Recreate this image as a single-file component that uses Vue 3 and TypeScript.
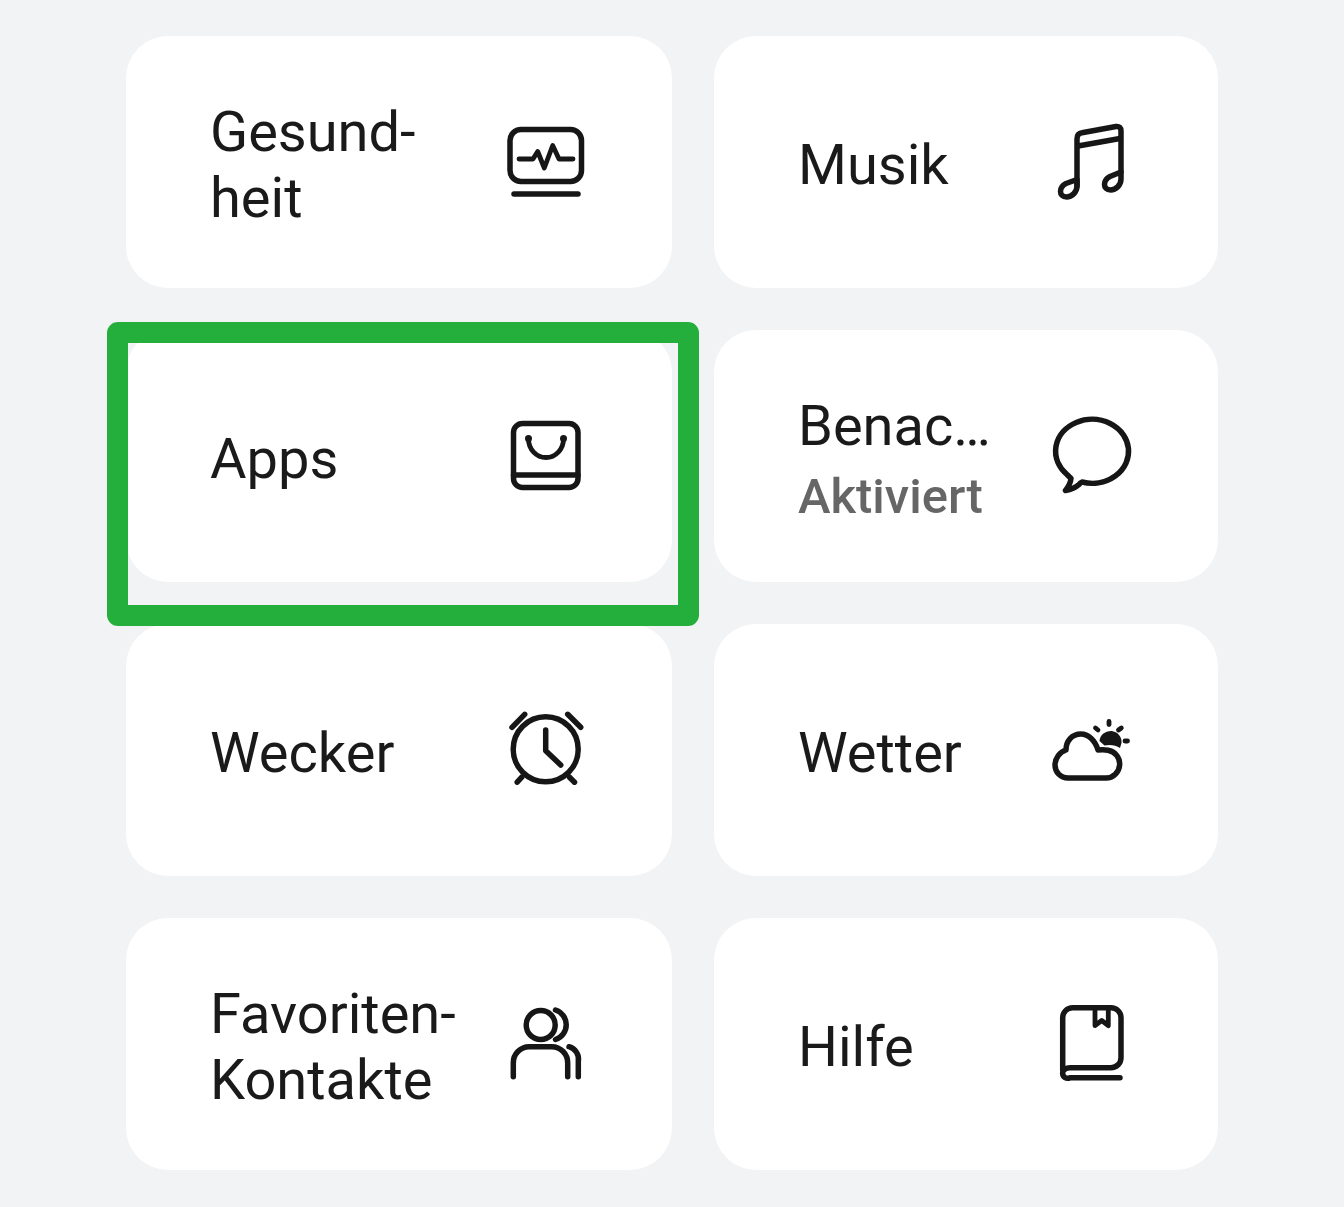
<script setup lang="ts">
interface Tile {
  label: string
  sub?: string
  marked?: boolean
  strokes: string[]
  thin?: string[]
  fills?: string[]
}

const tiles: Tile[] = [
  {
    label: 'Gesund-heit',
    strokes: ['M17 9.5H66.5A11 11 0 0 1 77.5 20.5V50.5A11 11 0 0 1 66.5 61.5H17A11 11 0 0 1 6 50.5V20.5A11 11 0 0 1 17 9.5Z', 'M10 74H74'],
    thin: ['M15 39H29L33.7 31.5L40.3 48L48.7 25.5L55 39H69']
  },
  {
    label: 'Musik',
    strokes: [
      'M27 66V19Q27 13.5 32 12.8L66 6.5Q71 6 71 11V52',
      'M28 26L70 18.5',
      'M27 59.5V66C27 72 22 77 16.5 77C12.5 77 10.5 74.5 10.5 71.5C10.5 68 13 65 16 63.5Z',
      'M71 52V59C71 65 66 70 60.5 70C56.5 70 54.5 67.5 54.5 64.5C54.5 61 57 58 60 56.5Z'
    ]
  },
  {
    label: 'Apps',
    marked: true,
    strokes: ['M18.5 9.5H65A9 9 0 0 1 74 18.5V64.5A9 9 0 0 1 65 73.5H18.5A9 9 0 0 1 9.5 64.5V18.5A9 9 0 0 1 18.5 9.5Z', 'M9.5 61H74'],
    thin: ['M24.5 25A17.5 18.5 0 0 0 59.5 25'],
    fills: ['M21 24.5a3.5 3.5 0 1 0 7 0a3.5 3.5 0 1 0 -7 0Z', 'M56 24.5a3.5 3.5 0 1 0 7 0a3.5 3.5 0 1 0 -7 0Z']
  },
  {
    label: 'Benachrichtigungen',
    sub: 'Aktiviert',
    strokes: ['M32 68A36.5 32 0 1 0 17 60.5L21 64.5Q20.5 70 15.5 76.5Q24 75 29 70.5Q30.5 68.5 32 68Z']
  },
  {
    label: 'Wecker',
    strokes: [
      'M9.2 41.3a32.5 32.5 0 1 0 65 0a32.5 32.5 0 1 0 -65 0Z',
      'M8 19.3L20.7 6.3',
      'M63.7 6.3L76.7 19.3',
      'M41.7 22V42.7L56.7 57',
      'M13.2 74.2L17.8 69.2',
      'M70.5 74.2L65.5 69.2'
    ]
  },
  {
    label: 'Wetter',
    strokes: ['M18 70H56A14 14 0 0 0 58 42.2Q54 41.5 48 42C45 32 38 26 31 26C22 26 16 33 16 42C10 44 5 50 5 57C5 64 10.5 70 18 70Z'],
    thin: ['M59 13.5V16.5', 'M45.5 20L48 22', 'M71.3 20L68.5 22', 'M75 33H77.5'],
    fills: ['M49.5 33A11 11 0 1 1 71.5 35L70 40Q64 36 54.5 37.5Z']
  },
  {
    label: 'Favoriten-Kontakte',
    strokes: [
      'M22.2 23a14.5 14.5 0 1 0 29 0a14.5 14.5 0 1 0 -29 0Z',
      'M51.5 8A15.5 15.5 0 0 1 51.5 37.5',
      'M9.3 74.7V61A16 16 0 0 1 25.3 44.7H47.7A16 16 0 0 1 63.7 61V74.7',
      'M65 44.7A13 13 0 0 1 74.3 59.7V74.7'
    ]
  },
  {
    label: 'Hilfe',
    strokes: [
      'M12.7 68V15.7A10 10 0 0 1 22.7 5.7H61A10 10 0 0 1 71 15.7V55.7A10 10 0 0 1 61 65.7H20A7.3 5 0 0 0 12.7 70.7A5 5 0 0 0 20 75.7H70'
    ],
    thin: ['M45 6V23.7L51.7 18.5L58.3 23.7V6']
  }
]
</script>

<template>
  <div class="page">
    <div class="grid">
      <div v-for="tile in tiles" :key="tile.label" class="tile">
        <div class="text">
          <div class="label" :class="{ clip: tile.sub }">{{ tile.label }}</div>
          <div v-if="tile.sub" class="sub">{{ tile.sub }}</div>
        </div>
        <svg class="icon" viewBox="0 0 84 84" fill="none" stroke="#161616" stroke-linecap="round" stroke-linejoin="round">
          <path v-for="d in tile.strokes" :key="d" :d="d" stroke-width="5.5" />
          <path v-for="d in tile.thin" :key="d" :d="d" stroke-width="4.8" />
          <path v-for="d in tile.fills" :key="d" :d="d" fill="#161616" stroke="none" />
        </svg>
        <div v-if="tile.marked" class="marker" />
      </div>
    </div>
  </div>
</template>

<style>
body {
  background: #f1f3f5;
}
</style>

<style scoped>
.page {
  height: 1207px;
  padding: 36px 0 0 126px;
  box-sizing: border-box;
  overflow: hidden;
  font-family: Roboto, "Liberation Sans", sans-serif;
}

.grid {
  display: grid;
  grid-template-columns: 546px 504px;
  grid-auto-rows: 252px;
  gap: 42px;
}

.tile {
  position: relative;
  display: flex;
  align-items: center;
  gap: 42px;
  padding: 0 84px;
  background: #fff;
  border-radius: 42px;
}

.text {
  flex: 1;
  min-width: 0;
  padding-top: 6px;
}

.label {
  font-size: 56px;
  line-height: 66px;
  color: #1a1a1a;
}

.label.clip {
  margin-top: 1px;
  white-space: nowrap;
  overflow: hidden;
  text-overflow: ellipsis;
}

.sub {
  margin-top: 8px;
  font-size: 49px;
  line-height: 60px;
  font-weight: 500;
  color: #666;
}

.icon {
  flex: none;
  width: 84px;
  height: 84px;
}

.marker {
  position: absolute;
  z-index: 1;
  top: -8px;
  right: -27px;
  bottom: -44px;
  left: -19px;
  border: 21px solid #24ae3c;
  border-radius: 11px;
}
</style>
